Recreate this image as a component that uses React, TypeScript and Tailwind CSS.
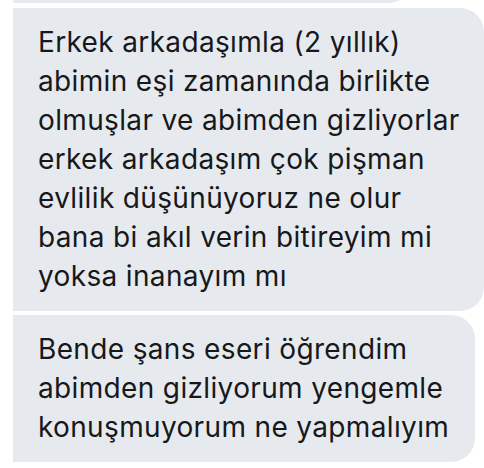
import React from 'react';

const first = [
  'Erkek arkadaşımla (2 yıllık)',
  'abimin eşi zamanında birlikte',
  'olmuşlar ve abimden gizliyorlar',
  'erkek arkadaşım çok pişman',
  'evlilik düşünüyoruz ne olur',
  'bana bi akıl verin bitireyim mi',
  'yoksa inanayım mı',
];

const second = [
  'Bende şans eseri öğrendim',
  'abimden gizliyorum yengemle',
  'konuşmuyorum ne yapmalıyım',
];

const Bubble: React.FC<{ lines: string[]; width: string }> = ({ lines, width }) => (
  <div className={`${width} bg-[#e6eaef] rounded-r-[24px] pl-[25px] py-[15px]`}>
    {lines.map((l, i) => (
      <div key={i} className="whitespace-nowrap">{l}</div>
    ))}
  </div>
);

export default function App() {
  return (
    <div
      className="w-[484px] h-[468px] bg-white overflow-hidden pl-[13px] text-[28px] leading-[39px] tracking-[0.35px] text-[#17181a]"
      style={{ fontFamily: 'Inter, "Noto Sans", sans-serif' }}
    >
      {/* tail of previous message */}
      <div className="h-[3px] overflow-hidden flex flex-col justify-end">
        <div className="shrink-0 h-[40px] w-[398px] bg-[#e6eaef] rounded-br-[22px]" />
      </div>
      <div className="flex flex-col gap-[4px] pt-[5px]">
        <Bubble lines={first} width="w-[471px]" />
        <Bubble lines={second} width="w-[462px]" />
      </div>
    </div>
  );
}
